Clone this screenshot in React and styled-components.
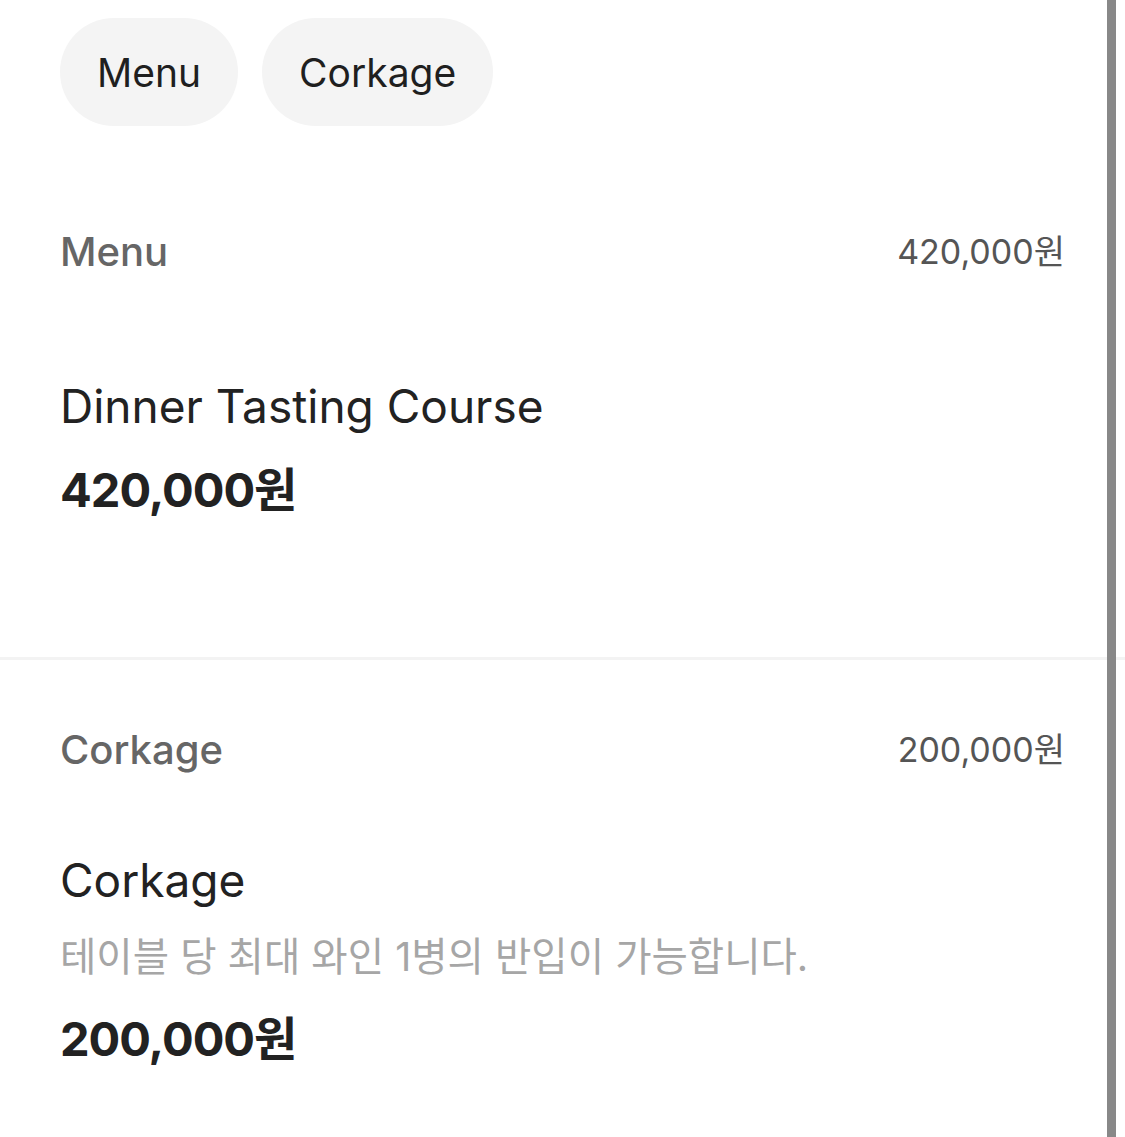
import React, { useState } from "react";
import styled, { createGlobalStyle } from "styled-components";

const GlobalStyle = createGlobalStyle`
  html, body {
    margin: 0;
    padding: 0;
    background: #fff;
    overflow: hidden;
  }
  body {
    font-family: Inter, "Noto Sans CJK KR", sans-serif;
    color: #222;
  }
`;

const sections = [
  {
    id: "menu",
    label: "Menu",
    total: "420,000원",
    itemGap: 94,
    items: [{ name: "Dinner Tasting Course", price: "420,000원" }],
  },
  {
    id: "corkage",
    label: "Corkage",
    total: "200,000원",
    itemGap: 70,
    items: [
      {
        name: "Corkage",
        desc: "테이블 당 최대 와인 1병의 반입이 가능합니다.",
        price: "200,000원",
      },
    ],
  },
];

export default function App() {
  const [active, setActive] = useState("menu");

  return (
    <Page>
      <GlobalStyle />
      <ChipRow>
        {sections.map((s) => (
          <Chip key={s.id} onClick={() => setActive(s.id)} active={active === s.id}>
            {s.label}
          </Chip>
        ))}
      </ChipRow>

      {sections.map((s, i) => (
        <Section key={s.id} first={i === 0} last={i === sections.length - 1}>
          <SectionHeader>
            <SectionLabel>{s.label}</SectionLabel>
            <SectionTotal>{s.total}</SectionTotal>
          </SectionHeader>
          <ItemList gap={s.itemGap}>
            {s.items.map((item) => (
              <Item key={item.name}>
                <ItemName>{item.name}</ItemName>
                {item.desc && <ItemDesc>{item.desc}</ItemDesc>}
                <ItemPrice hasDesc={!!item.desc}>{item.price}</ItemPrice>
              </Item>
            ))}
          </ItemList>
        </Section>
      ))}

      <ScrollThumb />
    </Page>
  );
}

const Page = styled.div`
  width: 100%;
  min-height: 100vh;
`;

const ChipRow = styled.nav`
  display: flex;
  gap: 24px;
  padding: 18px 60px 0;
`;

const Chip = styled.button`
  height: 108px;
  padding: 0 37px;
  border: none;
  border-radius: 54px;
  background: #f4f4f4;
  color: #1f1f1f;
  font-family: inherit;
  font-size: 39px;
  font-weight: 400;
  cursor: pointer;
`;

const Section = styled.section`
  padding: ${(p) => (p.first ? "96px" : "60px")} 60px ${(p) => (p.last ? "40px" : "135px")};
  border-bottom: ${(p) => (p.last ? "none" : "3px solid #f3f3f3")};
`;

const SectionHeader = styled.div`
  display: flex;
  justify-content: space-between;
  align-items: center;
  height: 60px;
`;

const SectionLabel = styled.h2`
  margin: 0;
  font-size: 40px;
  font-weight: 500;
  line-height: 60px;
  color: #666;
`;

const SectionTotal = styled.span`
  font-size: 34px;
  line-height: 60px;
  color: #555;
`;

const ItemList = styled.div`
  display: flex;
  flex-direction: column;
  margin-top: ${(p) => p.gap}px;
`;

const Item = styled.div`
  display: flex;
  flex-direction: column;
`;

const ItemName = styled.h3`
  margin: 0;
  font-size: 46px;
  font-weight: 400;
  line-height: 60px;
  color: #222;
`;

const ItemDesc = styled.p`
  margin: 19px 0 0;
  font-size: 39.5px;
  line-height: 56px;
  color: #a6a6a6;
`;

const ItemPrice = styled.div`
  margin-top: ${(p) => (p.hasDesc ? "22px" : "22px")};
  font-size: 47px;
  font-weight: 700;
  line-height: 64px;
  letter-spacing: -1px;
  color: #222;
`;

const ScrollThumb = styled.div`
  position: fixed;
  top: 0;
  bottom: 0;
  right: 9px;
  width: 9px;
  background: #888;
`;
